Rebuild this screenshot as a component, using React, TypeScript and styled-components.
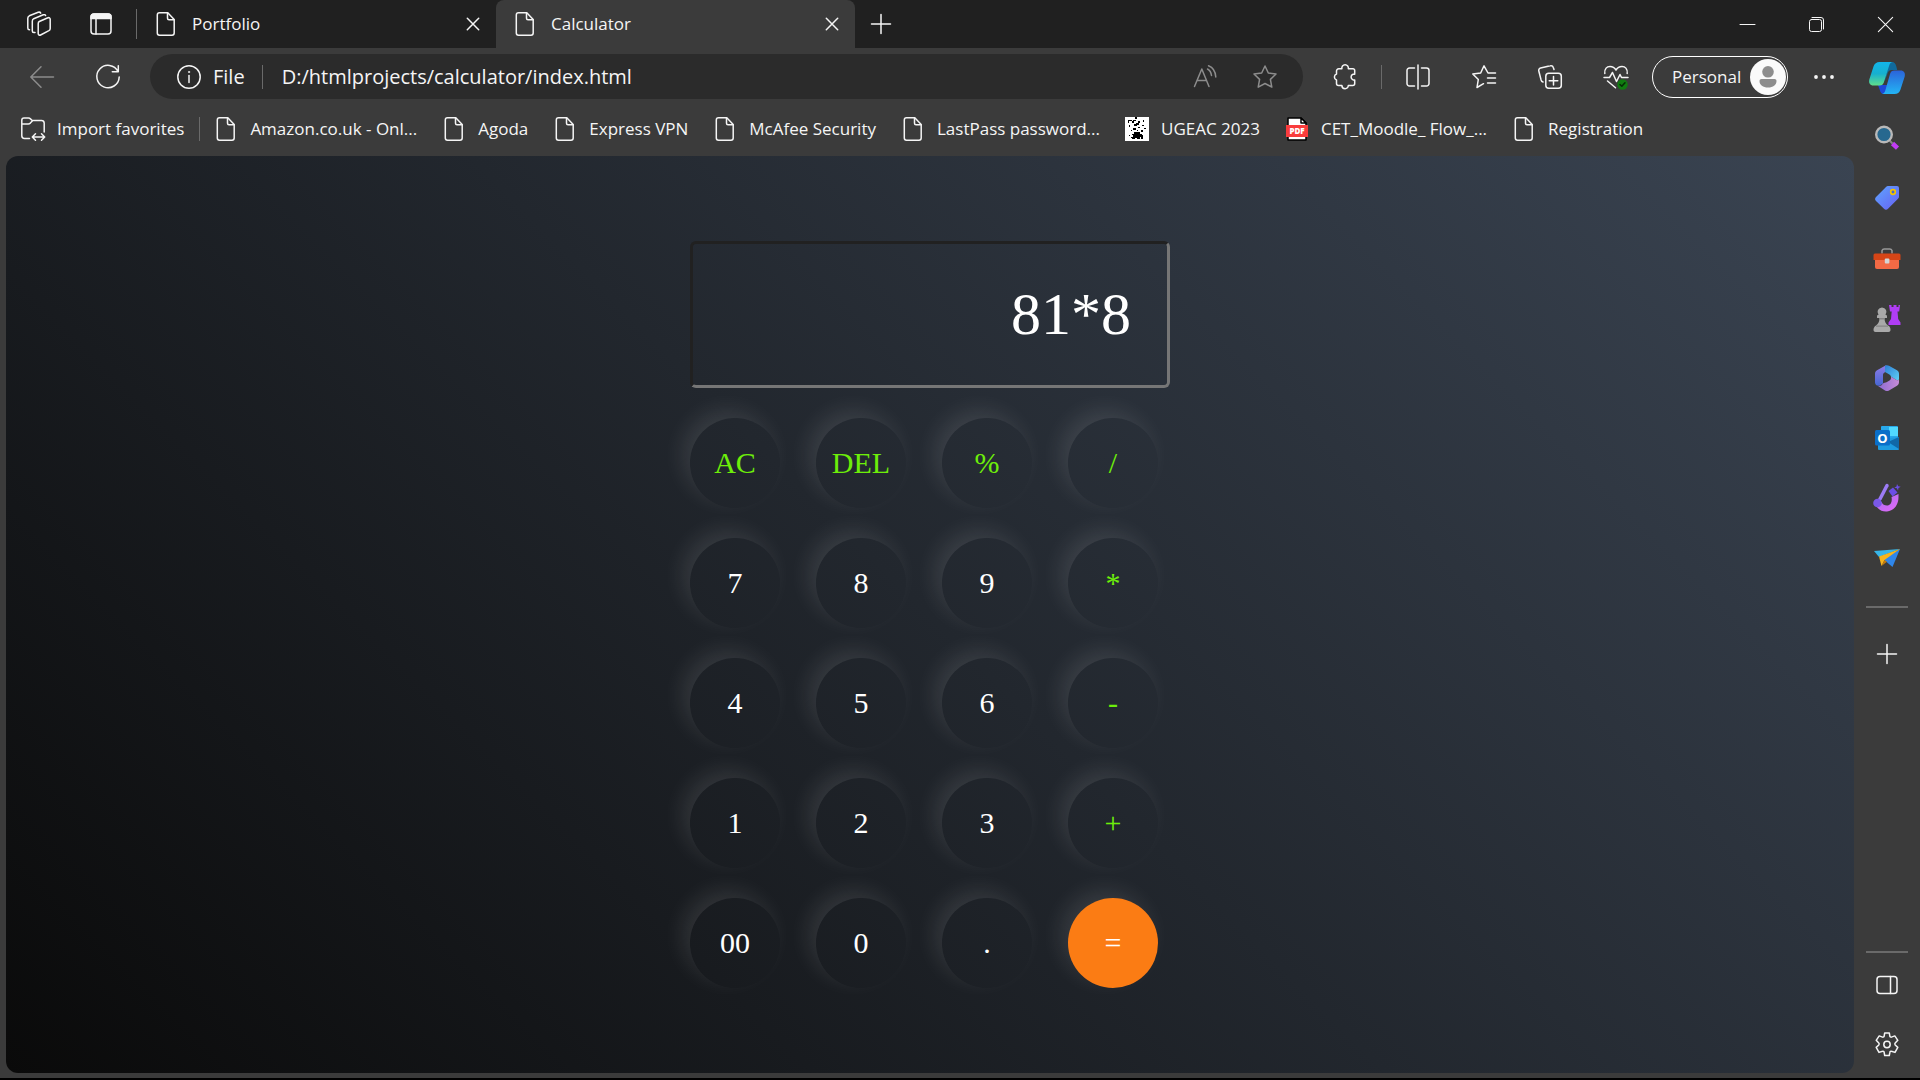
import React, { useState } from "react";
import styled, { createGlobalStyle, css } from "styled-components";

const color = {
  strip: "#202020",
  frame: "#3b3b3b",
  field: "#2b2b2b",
  line: "#6a6a6a",
  text: "#f5f5f5",
  muted: "#8c8c8c",
  operator: "#6dee0a",
  equals: "#fb7c14",
};

const GlobalStyle = createGlobalStyle`
  *, *::before, *::after { box-sizing: border-box; }
  body {
    margin: 0;
    background: #000;
    color: ${color.text};
    font-family: "Open Sans", "Noto Sans", sans-serif;
    font-size: 17px;
    line-height: 24px;
  }
  button, input { font: inherit; color: inherit; }
  a { color: inherit; text-decoration: none; }
`;

/* ---------- layout ---------- */

const Browser = styled.div`
  display: flex;
  flex-direction: column;
  height: 100vh;
  background: ${color.frame};
  border-bottom: 2px solid #000;
`;

const TabStrip = styled.header`
  display: flex;
  align-items: stretch;
  height: 48px;
  flex: none;
  background: ${color.strip};
`;

const Body = styled.div`
  flex: 1;
  min-height: 0;
  display: grid;
  grid-template-columns: minmax(0, 1fr) 66px;
`;

const Main = styled.div`
  display: flex;
  flex-direction: column;
  min-height: 0;
`;

const Svg = styled.svg<{ $size?: number }>`
  display: block;
  flex: none;
  width: ${(p) => p.$size ?? 24}px;
  height: ${(p) => p.$size ?? 24}px;
  fill: none;
  stroke: currentColor;
  stroke-width: 1.5;
  stroke-linecap: round;
  stroke-linejoin: round;
  overflow: visible;
`;

const BareButton = styled.button`
  display: flex;
  align-items: center;
  justify-content: center;
  padding: 0;
  border: 0;
  background: transparent;
  cursor: pointer;
`;

const Rule = styled.span<{ $height: number }>`
  flex: none;
  width: 1px;
  height: ${(p) => p.$height}px;
  background: ${color.line};
`;

/* ---------- tab strip ---------- */

const StripActions = styled.div`
  display: flex;
  align-items: center;
  padding: 0 0 0 8px;
`;

const StripButton = styled(BareButton)`
  width: 62px;
  height: 48px;

  & + ${Rule} {
    margin-left: 4px;
  }
`;

const Tab = styled.div<{ $active?: boolean }>`
  display: flex;
  align-items: center;
  gap: 14px;
  width: 359px;
  padding: 0 13px 0 17px;
  ${(p) =>
    p.$active &&
    css`
      background: ${color.frame};
      border-radius: 8px 8px 0 0;
    `}
`;

const TabTitle = styled.span`
  flex: 1;
`;

const CloseTab = styled(BareButton)`
  width: 20px;
  height: 20px;
`;

const NewTab = styled(BareButton)`
  width: 52px;
`;

const WindowButtons = styled.div`
  display: flex;
  margin-left: auto;
`;

const WindowButton = styled(BareButton)`
  width: 69px;
`;

/* ---------- toolbar ---------- */

const Toolbar = styled.nav`
  display: flex;
  align-items: center;
  gap: 6px;
  height: 57px;
  flex: none;
  padding-left: 12px;
`;

const ToolButton = styled(BareButton)<{ $muted?: boolean }>`
  width: 60px;
  height: 45px;
  flex: none;
  color: ${(p) => (p.$muted ? color.muted : color.text)};
`;

const Address = styled.div`
  flex: 1;
  display: flex;
  align-items: center;
  height: 45px;
  margin: 0 6px;
  padding: 0 8px 0 27px;
  border-radius: 23px;
  background: ${color.field};
  font-size: 20px;
`;

const SiteInfo = styled(BareButton)`
  gap: 12px;
  margin-right: 17px;
`;

const Url = styled.input`
  flex: 1;
  min-width: 0;
  height: 32px;
  padding: 0;
  margin-left: 19px;
  border: 0;
  outline: 0;
  background: transparent;
`;

const Profile = styled(BareButton)`
  justify-content: space-between;
  width: 136px;
  height: 42px;
  flex: none;
  padding: 0 1px 0 19px;
  border: 1px solid #fff;
  border-radius: 21px;
`;

/* ---------- favourites ---------- */

const Favourites = styled.nav`
  display: flex;
  align-items: center;
  gap: 25px;
  height: 51px;
  flex: none;
  padding: 0 0 4px 21px;
  white-space: nowrap;
`;

const Favourite = styled.a`
  display: flex;
  align-items: center;
  gap: 12px;
`;

const ImportGroup = styled.div`
  display: flex;
  align-items: center;
  gap: 15px;
  margin-right: -11px;
`;

/* ---------- sidebar ---------- */

const Sidebar = styled.aside`
  display: flex;
  flex-direction: column;
  align-items: center;
`;

const SideButton = styled(BareButton)`
  width: 60px;
  height: 60px;
  flex: none;
`;

const SideRule = styled.hr<{ $below: number }>`
  width: 42px;
  height: 2px;
  margin: 18px 0 ${(p) => p.$below}px;
  border: 0;
  background: ${color.line};
`;

const SideBottom = styled.div`
  display: flex;
  flex-direction: column;
  align-items: center;
  margin-top: auto;
  padding-bottom: 3px;
`;

/* ---------- calculator page ---------- */

const Page = styled.main`
  flex: 1;
  display: flex;
  align-items: center;
  justify-content: center;
  margin: 0 0 5px 6px;
  border-radius: 12px;
  background: linear-gradient(45deg, #0a0a0a, #3a4452);
  font-family: "Liberation Serif", "Times New Roman", serif;
`;

const Calculator = styled.form`
  display: flex;
  flex-direction: column;
  gap: 30px;
  width: 480px;
`;

const Display = styled.input`
  width: 100%;
  padding: 36px;
  border: 3px solid;
  border-color: #212121 #767676 #767676 #212121;
  border-radius: 6px;
  outline: 0;
  background: transparent;
  color: #fff;
  font-size: 60px;
  line-height: 69px;
  text-align: right;
`;

const Keys = styled.div`
  display: grid;
  grid-template-columns: repeat(4, 90px);
  gap: 30px 36px;
`;

const Key = styled.button<{ $kind: "digit" | "operator" | "equals" }>`
  height: 90px;
  padding: 0;
  border: 0;
  border-radius: 50%;
  background: ${(p) => (p.$kind === "equals" ? color.equals : "transparent")};
  box-shadow: -8px -8px 22px rgba(255, 255, 255, 0.1);
  color: ${(p) => (p.$kind === "operator" ? color.operator : "#fff")};
  font-size: 30px;
  cursor: pointer;
`;

/* ---------- icons ---------- */

const PageIcon = () => (
  <Svg viewBox="0 0 24 24">
    <path d="M5.5.8h8.3L20.2 7.500v13.500a2.200 2.200 0 0 1-2.200 2.200H5.500A2.200 2.200 0 0 1 3.300 21V3A2.200 2.200 0 0 1 5.500.8z" />
    <path d="M13.500 1v5.300c0 .9.600 1.500 1.500 1.500h5" />
  </Svg>
);

const CrossIcon = ({ size = 12, weight = 1.5 }: { size?: number; weight?: number }) => (
  <Svg $size={size} viewBox="0 0 12 12">
    <path d="M.3.3l11.400 11.400M11.700.3L.3 11.700" style={{ strokeWidth: weight }} />
  </Svg>
);

const PlusIcon = () => (
  <Svg $size={20} viewBox="0 0 20 20">
    <path d="M10 .5v19M.5 10h19" />
  </Svg>
);

const WorkspacesIcon = () => (
  <Svg viewBox="0 0 24 24">
    <path d="M12.300 9.500l8.600-3.700a1.600 1.600 0 0 1 2.300 1.500v9.200c0 1-.4 1.700-1.300 2.200l-8.300 4.300a1.600 1.600 0 0 1-2.400-1.400V11.700c0-1 .3-1.800 1.100-2.200z" />
    <path d="M8 20.500H6.800c-.9 0-1.500-.6-1.500-1.500V9.200c0-1.200.4-2 1.400-2.500l9.600-3.900c1.200-.4 2-.1 2.300.8" />
    <path d="M2.500 17.800c-1.100-.1-1.700-.8-1.700-1.900V6.300c0-1.200.5-2 1.500-2.500L11.200.3c1.300-.4 2.100 0 2.500.8" />
  </Svg>
);

const TabActionsIcon = () => (
  <Svg $size={22} viewBox="0 0 22 22">
    <rect x="1" y="1" width="20" height="20" rx="3" />
    <path d="M1 5.500V4a3 3 0 0 1 3-3h14a3 3 0 0 1 3 3v1.500z" fill="currentColor" />
    <path d="M6 6v15" />
  </Svg>
);

const MinimiseIcon = () => (
  <Svg $size={15} viewBox="0 0 15 15">
    <path d="M0 7.500h15" style={{ strokeWidth: 1 }} />
  </Svg>
);

const RestoreIcon = () => (
  <Svg $size={15} viewBox="0 0 15 15">
    <g style={{ strokeWidth: 1 }}>
      <rect x=".5" y="2.500" width="12" height="12" rx="2" />
      <path d="M3 .5h9A2.500 2.500 0 0 1 14.500 3v9" />
    </g>
  </Svg>
);

const BackIcon = () => (
  <Svg viewBox="0 0 24 24">
    <path d="M23.500 12H.8M11 1.800L.8 12 11 22.200" />
  </Svg>
);

const ReloadIcon = () => (
  <Svg viewBox="0 0 24 24">
    <path d="M22 6.500A11.200 11.200 0 1 0 23.200 12M22.300.8v6h-6" />
  </Svg>
);

const InfoIcon = () => (
  <Svg viewBox="0 0 24 24">
    <circle cx="12" cy="12" r="11.200" />
    <path d="M12 10.500v7" />
    <circle cx="12" cy="7" r=".7" fill="currentColor" strokeWidth=".6" />
  </Svg>
);

const ReadAloudIcon = () => (
  <Svg viewBox="0 0 24 24">
    <path d="M1.500 21.500L8.800 4l7.200 17.500M4 15.500h9.500M14.500 4c2 1 3.600 3.200 4 6.500M15.500.8c4 1.600 7 5.700 7.300 11.200" />
  </Svg>
);

const starPath = "M12 1l3.300 7 7.700 1-5.600 5.400 1.400 7.700L12 18.500l-6.800 3.600 1.400-7.700L1 9l7.700-1z";

const StarIcon = () => (
  <Svg viewBox="0 0 24 24">
    <path d={starPath} />
  </Svg>
);

const ExtensionsIcon = () => (
  <Svg viewBox="0 0 24 24">
    <path d="M3.500 6A2.200 2.200 0 0 1 5.700 3.800h3.200a3.300 3.300 0 1 1 6.400 0H20A1.700 1.700 0 0 1 21.700 5.500v3.800h-1.700a3 3 0 0 0 0 5.600h1.700v3.600a2 2 0 0 1-2 2h-4.400a3.200 3.200 0 0 1-6.400 0H5.500a2 2 0 0 1-2-2V15a3.200 3.200 0 0 1 0-6z" />
  </Svg>
);

const SplitIcon = () => (
  <Svg viewBox="0 0 24 24">
    <path d="M12 0v24M8.500 3H3.500A2.500 2.500 0 0 0 1 5.500v13A2.500 2.500 0 0 0 3.500 21h5M15.500 3h5A2.500 2.500 0 0 1 23 5.500v13a2.500 2.500 0 0 1-2.500 2.500h-5" />
  </Svg>
);

const FavouritesIcon = () => (
  <Svg viewBox="0 0 24 24">
    <path d="M23.500 8H16L12 .8 8.700 8 .8 9l5.500 5.500-1.300 8 6.500-3.800M15.500 13h8M15.500 18h8" />
  </Svg>
);

const CollectionsIcon = () => (
  <Svg viewBox="0 0 24 24">
    <rect x="7.800" y="8.300" width="15.500" height="15" rx="3" />
    <path d="M15.500 11.500v8.500M11.200 15.800h8.600M16 4.500l-.7-2A2.500 2.500 0 0 0 12.300.8L2.600 3A2.400 2.400 0 0 0 .8 6l2.300 9c.3 1 .8 1.700 1.900 2" />
  </Svg>
);

const HealthIcon = () => (
  <Svg viewBox="0 0 24 24">
    <path d="M.8 8.500C.3 3.500 3 1.500 6 1.500c2.500 0 4.500 1 6 3.500 1.500-2.500 3.500-3.500 6-3.500 3 0 5.700 2 5.200 7M0 12.500h5.500l3-5 4 9 3.500-7 1.500 3H24M3.500 16l8 6.800" />
    <circle cx="18.500" cy="19.500" r="5.200" fill="#107c10" stroke="none" />
    <path d="M16 19.500l1.800 1.800 3.200-3.600" stroke="#062b06" />
  </Svg>
);

const AvatarIcon = () => (
  <Svg $size={36} viewBox="0 0 36 36">
    <circle cx="18" cy="18" r="18" fill="#fafafa" stroke="none" />
    <circle cx="18" cy="12.800" r="5.800" fill="#8d8d8d" stroke="none" />
    <path d="M11.500 20h13c1.200 0 2 .8 2 2 0 4-3.500 6.500-8.500 6.500S9.500 26 9.500 22c0-1.200.8-2 2-2z" fill="#8d8d8d" stroke="none" />
  </Svg>
);

const MoreIcon = () => (
  <Svg $size={20} viewBox="0 0 20 20">
    <g fill="currentColor" stroke="none">
      <circle cx="2" cy="10" r="1.900" />
      <circle cx="10" cy="10" r="1.900" />
      <circle cx="18" cy="10" r="1.900" />
    </g>
  </Svg>
);

const ImportIcon = () => (
  <Svg viewBox="0 0 24 24">
    <path d="M8.500 21.500H3.500A2.700 2.700 0 0 1 .8 18.800V3.200A2.200 2.200 0 0 1 3 1h4.500c.8 0 1.400.3 2 .9l1.700 1.600h9.300A2.700 2.700 0 0 1 23.200 6v9M.8 7h6.500c.8 0 1.400-.3 2-.9l2-2.100" />
    <path d="M11.500 20h12M14.500 16.800L11.300 20l3.200 3.200M20.500 16.800l3.200 3.200-3.200 3.200" />
  </Svg>
);

const QrIcon = () => (
  <Svg viewBox="0 0 24 24">
    <rect width="24" height="24" fill="#fff" stroke="none" />
    <path
      fill="#000"
      stroke="none"
      d="M10 0h2v2h-2zM3 3h4v1H4v2H3zM8 3h3v1H9v2H7V4h1zM13 4h2v2h-2zM18 3h1v2h-1zM11 6h3v2h-2v1H9V7h2zM4 8h1v2H4zM17 8h2v1h-2zM8 11h3v2H8zM13 10h2v1h-2zM19 11h2v1h-2zM6 13h1v1H6zM12 13h1v1h-1zM16 13h2v2h-2zM9 15h6v2h2v1h1v4h-2v-2h-1v2h-3v-1h-2v1H7v-1H6v-1h2v-2H7v-1h2zM4 18h1v1H4z"
    />
  </Svg>
);

const PdfBadge = styled.text`
  font: 800 8px "Open Sans", sans-serif;
  fill: #fff;
  stroke: none;
`;

const PdfIcon = () => (
  <Svg viewBox="0 0 24 24">
    <path d="M3 1h13l5 5v17H3z" fill="#fff" stroke="#000" />
    <path d="M16 1v5h5z" fill="#fff" stroke="#000" />
    <rect x="1" y="8" width="22" height="12" fill="#f93c3c" stroke="none" />
    <PdfBadge x="12" y="17" textAnchor="middle">PDF</PdfBadge>
  </Svg>
);

const CopilotIcon = () => (
  <Svg $size={36} viewBox="0 0 36 36">
    <defs>
      <linearGradient id="cpA" x1="0" y1="0" x2="0" y2="1">
        <stop offset="0" stopColor="#12b5ea" />
        <stop offset=".5" stopColor="#17b0cf" />
        <stop offset="1" stopColor="#5fdf8b" />
      </linearGradient>
      <linearGradient id="cpB" x1="0" y1="0" x2="0" y2="1">
        <stop offset="0" stopColor="#2b63d9" />
        <stop offset="1" stopColor="#23b5f5" />
      </linearGradient>
    </defs>
    <g stroke="none">
      <path d="M20 2h3c2.500 0 3.600 1.800 4.200 4l1 4h-5.500c-2 0-3.300 1-4 3l-3 8z" fill="#116a9c" />
      <path d="M9 25h12l3-1-3.500 7.500C19.500 33.500 18.500 34 16.500 34H15c-2.500 0-3.500-1.500-4.200-4z" fill="#1d48d8" />
      <path d="M10.500 2H24c-2 0-3.200 1.500-3.800 3.500L15 22c-.8 2.500-2 3.500-4.500 3.500H4.500C1 25.500-.5 23 .3 19.500L4.500 6.500C5.500 3.500 7.500 2 10.500 2z" fill="url(#cpA)" />
      <path d="M25.500 34H12.500c2 0 3.200-1.500 3.800-3.500L21 14c.8-2.500 2-3.500 4.500-3.500h6c3.500 0 5 2.500 4.200 6L31.500 29.500c-1 3-3 4.500-6 4.500z" fill="url(#cpB)" />
    </g>
  </Svg>
);

const SearchIcon = () => (
  <Svg viewBox="0 0 24 24">
    <path d="M17.500 17.500l5 4.700" stroke="#c13cf5" style={{ strokeWidth: 4.500, strokeLinecap: "butt" }} />
    <path d="M14 14l3 3" stroke="#888" style={{ strokeWidth: 2 }} />
    <circle cx="9" cy="8.500" r="7.800" fill="#27688f" stroke="#b9b9b9" style={{ strokeWidth: 2.400 }} />
  </Svg>
);

const TagIcon = () => (
  <Svg viewBox="0 0 24 24">
    <defs>
      <linearGradient id="tag" x1="0" y1="0" x2="1" y2="1">
        <stop offset="0" stopColor="#5ea5ff" />
        <stop offset="1" stopColor="#6760f2" />
      </linearGradient>
    </defs>
    <path d="M13 0h9a2 2 0 0 1 2 2v8.500c0 1-.3 1.600-1 2.300l-10 10c-1.200 1.200-2.800 1.200-4 0L1 15c-1.200-1.200-1.200-2.800 0-4L11 1c.6-.6 1.200-1 2-1z" fill="url(#tag)" stroke="none" />
    <circle cx="18" cy="6" r="2.300" fill="#4968c8" stroke="#f5c400" style={{ strokeWidth: 1.700 }} />
  </Svg>
);

const ToolboxIcon = () => (
  <Svg $size={28} viewBox="0 0 28 28">
    <path d="M9 9V6.500A2.500 2.500 0 0 1 11.500 5h5A2.500 2.500 0 0 1 19 6.500V9" stroke="#999" />
    <path d="M2 14h24v9a2 2 0 0 1-2 2H4a2 2 0 0 1-2-2z" fill="#f26a45" stroke="none" />
    <path d="M2 9.500h24a1.500 1.500 0 0 1 1.500 1.500v5H.5v-5A1.500 1.500 0 0 1 2 9.500z" fill="#d64516" stroke="none" />
    <rect x="11.800" y="14.500" width="4.600" height="5" rx="1" fill="#d5d5d5" stroke="none" />
  </Svg>
);

const ChessIcon = () => (
  <Svg $size={28} viewBox="0 0 28 28">
    <g stroke="none">
      <path d="M16 1h2.500v2h2V1h3v2h2V1H27l-.8 6.500h-1.700l.7 7.500 2.300 3.500V21H15.500v-2.500L18 15l.7-7.500H17z" fill="#b03df5" />
      <path d="M9 3.500a4.500 4.500 0 0 1 3.500 7.300l1.500.7v2.500h-2.500c0 3.500 1 5.500 3.500 7.500 2 1 2.500 2.500 2.500 4.500 0 1.200-.8 2-2 2H2.500c-1.200 0-2-.8-2-2 0-2 .8-3.500 2.500-4.500 2.500-2 3.500-4 3.500-7.500H4v-2.500l1.500-.7A4.500 4.500 0 0 1 9 3.500z" fill="#a9a9a9" />
      <path d="M6.500 14h5v1.500h-5zM3 21.500h12v1.300H3z" fill="#858585" />
    </g>
  </Svg>
);

const Microsoft365Icon = () => (
  <Svg $size={26} viewBox="0 0 26 26">
    <defs>
      <linearGradient id="m365a" x1="0" y1="0" x2="0" y2="1">
        <stop offset="0" stopColor="#8f7be6" />
        <stop offset="1" stopColor="#4767d3" />
      </linearGradient>
      <linearGradient id="m365b" x1="0" y1="0" x2="1" y2="1">
        <stop offset="0" stopColor="#2d7fd6" />
        <stop offset="1" stopColor="#5fd0f5" />
      </linearGradient>
      <linearGradient id="m365c" x1="0" y1="0" x2="1" y2="0">
        <stop offset="0" stopColor="#8c6bd0" />
        <stop offset="1" stopColor="#c78bd8" />
      </linearGradient>
    </defs>
    <g stroke="none">
      <path d="M12 .2L3 5.200C1.700 6 1 7.200 1 8.700v8.800c0 2.600 3 4.200 5.200 2.800L9 18.500V10c0-1.200.6-2 1.500-2.600L16 4z" fill="url(#m365a)" />
      <path d="M11 .8c1.300-.8 2.700-.8 4 0L23 5.200c1.400.8 2 2 2 3.500v5c0 1.300-1.300 2-2.500 1.300L17 11.800c-.2-1.200-.7-1.800-1.600-2.300L11 7z" fill="url(#m365b)" />
      <path d="M17 11.800l5.500 3.200c1.200.7 2.500 0 2.500-1.300v3.600c0 1.500-.7 2.700-2 3.500l-8 4.600c-1.300.8-2.700.8-4 0L4 21c3 .6 4-1.500 5-2.500.8-.8 2.500-.6 3.500-1.200l3-1.800c.9-.5 1.500-1.500 1.500-2.500z" fill="url(#m365c)" />
    </g>
  </Svg>
);

const OutlookLetter = styled.text`
  font: bold 13px "Open Sans", sans-serif;
  fill: #fff;
  stroke: none;
`;

const OutlookIcon = () => (
  <Svg viewBox="0 0 24 24">
    <g stroke="none">
      <rect x="6" y="0" width="17" height="16" rx="1" fill="#28a8ea" />
      <path d="M14 1h9v9h-9z" fill="#50d9ff" />
      <path d="M3 13l21-2v12a1 1 0 0 1-1 1H4a1 1 0 0 1-1-1z" fill="#1d9be0" />
      <path d="M24 11v12L13 16z" fill="#1068a8" />
      <rect x="0" y="4" width="15" height="15.500" rx="1.500" fill="#0a6fc9" />
    </g>
    <OutlookLetter x="7.500" y="16.500" textAnchor="middle">O</OutlookLetter>
  </Svg>
);

const DesignerIcon = () => (
  <Svg $size={28} viewBox="0 0 28 28">
    <defs>
      <linearGradient id="brush" x1="0" y1="0" x2="1" y2="1">
        <stop offset="0" stopColor="#a070f0" />
        <stop offset="1" stopColor="#e668f7" />
      </linearGradient>
    </defs>
    <path d="M2 19c2 6 6.500 9 12 8.500 7-.7 11.500-6.500 11.500-14.500V10l-7 3c1 5-1 8.500-4.500 8.500-2.500 0-4.500-1-5.500-3.500z" fill="url(#brush)" stroke="none" />
    <path d="M14 1.500L7 15" stroke="#9c7cf5" style={{ strokeWidth: 3.500 }} />
    <circle cx="4.500" cy="19" r="4.300" fill="#7a58e8" stroke="none" />
    <path d="M15.500 7l4.500-3.500 4.500 5-5 4zM24 0l1.200 2.200 2.500.5-2.200 1.200-.5 2.500-1.200-2.200-2.500-.5 2.200-1.200z" fill="#6b4ee6" stroke="none" />
  </Svg>
);

const DropIcon = () => (
  <Svg $size={26} viewBox="0 0 26 26">
    <g stroke="none">
      <path d="M0 6l26-2L5 12z" fill="#38b6e8" />
      <path d="M26 4L18.500 22 9 14z" fill="#2f86ea" />
      <path d="M26 4L5 11.500 7.500 21l3-6z" fill="#f7b51c" />
      <path d="M7.500 21l3-6 2.500 1.800z" fill="#c27a0c" />
    </g>
  </Svg>
);

const PanelIcon = () => (
  <Svg $size={22} viewBox="0 0 22 22">
    <rect x="1" y="2.500" width="20" height="17" rx="3" />
    <path d="M14.500 2.500v17" />
  </Svg>
);

const GearIcon = () => (
  <Svg viewBox="0 0 24 24">
    <path d="M9.700 0h4.600l.6 3.300c.1.500.9 1 1.500.8l3.400-1.200 3 4.400-2.600 2.700c-.5.500-.5 1.200 0 2l2.600 2.400-2.800 5-3.600-1.100c-.6-.2-1.400.2-1.500.9l-.6 3.300H9.700l-.6-3.300c-.1-.6-.9-1.100-1.500-.9L4 19.400l-2.800-5L3.800 12c.5-.8.500-1.500 0-2L1.200 7.300l3-4.400 3.400 1.200c.6.200 1.400-.3 1.500-.8z" />
    <circle cx="12" cy="11.500" r="3.200" />
  </Svg>
);

/* ---------- content ---------- */

const favourites = [
  { label: "Amazon.co.uk - Onl...", Icon: PageIcon },
  { label: "Agoda", Icon: PageIcon },
  { label: "Express VPN", Icon: PageIcon },
  { label: "McAfee Security", Icon: PageIcon },
  { label: "LastPass password...", Icon: PageIcon },
  { label: "UGEAC 2023", Icon: QrIcon },
  { label: "CET_Moodle_ Flow_...", Icon: PdfIcon },
  { label: "Registration", Icon: PageIcon },
];

const sideApps = [
  { label: "Search", Icon: SearchIcon },
  { label: "Shopping", Icon: TagIcon },
  { label: "Tools", Icon: ToolboxIcon },
  { label: "Games", Icon: ChessIcon },
  { label: "Microsoft 365", Icon: Microsoft365Icon },
  { label: "Outlook", Icon: OutlookIcon },
  { label: "Image Creator", Icon: DesignerIcon },
  { label: "Drop", Icon: DropIcon },
];

const keys = [
  "AC", "DEL", "%", "/",
  "7", "8", "9", "*",
  "4", "5", "6", "-",
  "1", "2", "3", "+",
  "00", "0", ".", "=",
];

const kindOf = (key: string) =>
  key === "=" ? "equals" : /^[\d.]+$/.test(key) ? "digit" : "operator";

export default function App() {
  const [value, setValue] = useState("81*8");

  const press = (key: string) => {
    if (key === "AC") setValue("");
    else if (key === "DEL") setValue((v) => v.slice(0, -1));
    else if (key === "=") {
      try {
        setValue(String(new Function(`return ${value}`)()));
      } catch {
        setValue("Error");
      }
    } else setValue((v) => v + key);
  };

  return (
    <Browser>
      <GlobalStyle />
      <TabStrip>
        <StripActions>
          <StripButton aria-label="Workspaces"><WorkspacesIcon /></StripButton>
          <StripButton aria-label="Tab actions"><TabActionsIcon /></StripButton>
          <Rule $height={30} />
        </StripActions>
        <Tab>
          <PageIcon />
          <TabTitle>Portfolio</TabTitle>
          <CloseTab aria-label="Close Portfolio"><CrossIcon /></CloseTab>
        </Tab>
        <Tab $active>
          <PageIcon />
          <TabTitle>Calculator</TabTitle>
          <CloseTab aria-label="Close Calculator"><CrossIcon /></CloseTab>
        </Tab>
        <NewTab aria-label="New tab"><PlusIcon /></NewTab>
        <WindowButtons>
          <WindowButton aria-label="Minimise"><MinimiseIcon /></WindowButton>
          <WindowButton aria-label="Restore"><RestoreIcon /></WindowButton>
          <WindowButton aria-label="Close"><CrossIcon size={15} weight={0.9} /></WindowButton>
        </WindowButtons>
      </TabStrip>

      <Body>
        <Main>
          <Toolbar>
            <ToolButton $muted aria-label="Back"><BackIcon /></ToolButton>
            <ToolButton aria-label="Reload"><ReloadIcon /></ToolButton>
            <Address>
              <SiteInfo><InfoIcon />File</SiteInfo>
              <Rule $height={24} />
              <Url aria-label="Address" defaultValue="D:/htmlprojects/calculator/index.html" />
              <ToolButton $muted aria-label="Read aloud"><ReadAloudIcon /></ToolButton>
              <ToolButton $muted aria-label="Add to favourites"><StarIcon /></ToolButton>
            </Address>
            <ToolButton aria-label="Extensions"><ExtensionsIcon /></ToolButton>
            <Rule $height={24} />
            <ToolButton aria-label="Split screen"><SplitIcon /></ToolButton>
            <ToolButton aria-label="Favourites"><FavouritesIcon /></ToolButton>
            <ToolButton aria-label="Collections"><CollectionsIcon /></ToolButton>
            <ToolButton aria-label="Browser essentials"><HealthIcon /></ToolButton>
            <Profile>Personal<AvatarIcon /></Profile>
            <ToolButton aria-label="More"><MoreIcon /></ToolButton>
          </Toolbar>

          <Favourites>
            <ImportGroup>
              <Favourite href="#"><ImportIcon />Import favorites</Favourite>
              <Rule $height={24} />
            </ImportGroup>
            {favourites.map(({ label, Icon }) => (
              <Favourite href="#" key={label}><Icon />{label}</Favourite>
            ))}
          </Favourites>

          <Page>
            <Calculator onSubmit={(e) => e.preventDefault()}>
              <Display aria-label="Result" readOnly value={value} />
              <Keys>
                {keys.map((key) => (
                  <Key key={key} type="button" $kind={kindOf(key)} onClick={() => press(key)}>
                    {key}
                  </Key>
                ))}
              </Keys>
            </Calculator>
          </Page>
        </Main>

        <Sidebar>
          <SideButton aria-label="Copilot"><CopilotIcon /></SideButton>
          {sideApps.map(({ label, Icon }) => (
            <SideButton key={label} aria-label={label}><Icon /></SideButton>
          ))}
          <SideRule $below={16} />
          <SideButton aria-label="Customise"><PlusIcon /></SideButton>
          <SideBottom>
            <SideRule $below={2} />
            <SideButton aria-label="Toggle sidebar"><PanelIcon /></SideButton>
            <SideButton aria-label="Settings"><GearIcon /></SideButton>
          </SideBottom>
        </Sidebar>
      </Body>
    </Browser>
  );
}
